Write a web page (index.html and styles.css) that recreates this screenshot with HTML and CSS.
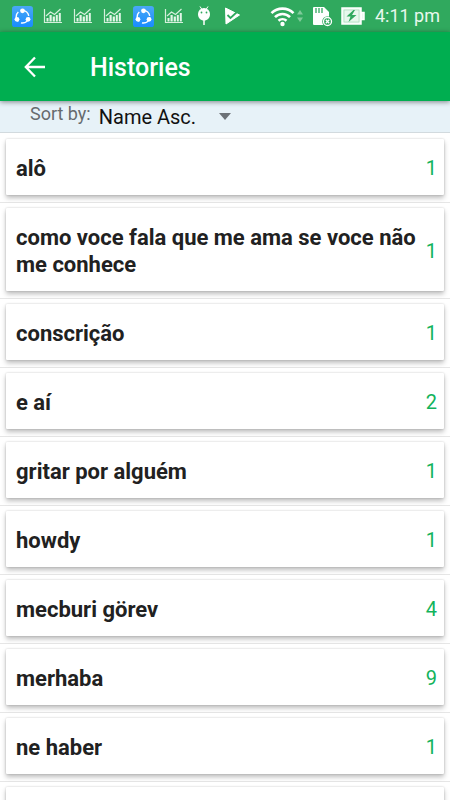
FILE: index.html
```html
<!DOCTYPE html>
<html lang="en">
<head>
<meta charset="utf-8">
<meta name="viewport" content="width=device-width, initial-scale=1">
<title>Histories</title>
<link rel="stylesheet" href="styles.css">
</head>
<body>
<svg class="defs" aria-hidden="true">
  <defs>
    <linearGradient id="blue" x1="0" y1="0" x2="0" y2="1"><stop offset="0" stop-color="#4aa8f5"/><stop offset="1" stop-color="#188cff"/></linearGradient>
    <symbol id="share" viewBox="0 0 22 22">
      <rect width="22" height="22" rx="3" fill="url(#blue)"/>
      <circle cx="11" cy="11.300" r="6.600" fill="none" stroke="#fff" stroke-width="1.500" stroke-dasharray="10.800 3" stroke-dashoffset="-1"/>
      <circle cx="11" cy="5" r="2.500" fill="#fff"/><circle cx="5.200" cy="14" r="2.500" fill="#fff"/><circle cx="16.800" cy="14" r="2.500" fill="#fff"/>
    </symbol>
    <symbol id="chart" viewBox="0 0 20 16">
      <path d="M1.500 1v13.500H19" fill="none" stroke="#d5efdc" stroke-width="1.200"/>
      <path d="M3.500 10h2v3.500h-2zM6.500 7h2.200v6.500H6.500zM9.700 8.500h2.200v5H9.700zM12.800 7h2v6.500h-2zM15.800 5h2v8.500h-2z" fill="#e2f5e7"/>
      <path d="M3 8l4.500-4 4 2.500L17.500 1" fill="none" stroke="#d5efdc" stroke-width="1.200"/>
    </symbol>
  </defs>
</svg>
<div class="status">
  <div class="notices">
    <svg class="app"><use href="#share"/></svg>
    <svg class="chart"><use href="#chart"/></svg>
    <svg class="chart"><use href="#chart"/></svg>
    <svg class="chart"><use href="#chart"/></svg>
    <svg class="app"><use href="#share"/></svg>
    <svg class="chart"><use href="#chart"/></svg>
    <svg class="bug" viewBox="0 0 14 20"><path d="M3.200.8l1.300 2M10.800.8l-1.300 2" stroke="#fff" stroke-linecap="round"/><path d="M1 8a6 6 0 0 1 12 0c0 4-2.500 6.500-6 6.500S1 12 1 8z" fill="#fff"/><path d="M7 13.500V19" stroke="#fff" stroke-width="1.500"/><circle cx="4.500" cy="6.500" r=".9" fill="#30a95e"/><circle cx="9.500" cy="6.500" r=".9" fill="#30a95e"/></svg>
    <svg class="play" viewBox="0 0 16 18"><path d="M1.500 1L15.500 8 2 17z" fill="#fff" stroke="#fff" stroke-linejoin="round"/><path d="M3.500 8l3 3 7-6.500" fill="none" stroke="#30a95e" stroke-width="1.800"/></svg>
  </div>
  <div class="system">
    <svg class="wifi" viewBox="0 0 34 22"><g fill="none" stroke="#fff" stroke-width="2.600"><path d="M1.500 8.200a15.500 15.500 0 0 1 22 0M5 12.100a10.500 10.500 0 0 1 15 0M8.500 15.800a5.800 5.800 0 0 1 8 0"/></g><circle cx="12.500" cy="19" r="2.200" fill="#fff"/><path d="M30 5l3 4.500h-6zM30 17l3-4.500h-6z" fill="#7fcb9a"/></svg>
    <svg class="card-icon" viewBox="0 0 21 21"><path d="M2 1h10l5 5v13H2a1 1 0 0 1-1-1V2a1 1 0 0 1 1-1z" fill="#fff"/><path d="M4 2v5M7 2v5M10 2v5" stroke="#30a95e" stroke-width="1.300"/><circle cx="15.500" cy="15.500" r="5.300" fill="#30a95e"/><circle cx="15.500" cy="15.500" r="4" fill="#30a95e" stroke="#fff" stroke-width="1.300"/><path d="M13.800 13.800l3.400 3.400M17.200 13.800l-3.400 3.400" stroke="#fff" stroke-width="1.300"/></svg>
    <svg class="battery" viewBox="0 0 24 18"><path d="M1 1h19v16H1zM20.500 5.500H23v7h-2.500z" fill="#e8f8ed" stroke="#fff" stroke-width="1.500"/><path d="M3 3h15v12H3z" fill="none" stroke="#a9dcbb" stroke-width=".7"/><path d="M12.500 3L5.500 9.500h4L7.500 15l8-7H11l3-5z" fill="#30a95e"/></svg>
    <span class="clock">4:11 pm</span>
  </div>
</div>
<header class="toolbar">
  <button class="back" type="button" aria-label="Back"><svg viewBox="0 0 22 22"><path d="M21 11H2M11 1.500L1.800 11l9.200 9.500" fill="none" stroke="#fff" stroke-width="2.300"/></svg></button>
  <h1>Histories</h1>
</header>
<div class="sort">
  <label for="order">Sort by:</label>
  <div class="picker">
    <select id="order"><option>Name Asc.</option></select>
    <svg class="caret" viewBox="0 0 12 7"><path d="M0 0h12L6 7z" fill="#6c7277"/></svg>
  </div>
</div>
<ul class="list">
  <li><div class="card"><span class="phrase">alô</span><span class="count">1</span></div></li>
  <li><div class="card"><span class="phrase">como voce fala que me ama se voce não me conhece</span><span class="count">1</span></div></li>
  <li><div class="card"><span class="phrase">conscrição</span><span class="count">1</span></div></li>
  <li><div class="card"><span class="phrase">e aí</span><span class="count">2</span></div></li>
  <li><div class="card"><span class="phrase">gritar por alguém</span><span class="count">1</span></div></li>
  <li><div class="card"><span class="phrase">howdy</span><span class="count">1</span></div></li>
  <li><div class="card"><span class="phrase">mecburi görev</span><span class="count">4</span></div></li>
  <li><div class="card"><span class="phrase">merhaba</span><span class="count">9</span></div></li>
  <li><div class="card"><span class="phrase">ne haber</span><span class="count">1</span></div></li>
  <li><div class="card"></div></li>
</ul>
</body>
</html>
```
FILE: styles.css
```css
* { box-sizing: border-box; }
body {
  margin: 0;
  height: 100vh;
  display: flex;
  flex-direction: column;
  overflow: hidden;
  background: #fff;
  color: #212121;
  font-family: Roboto, sans-serif;
}
svg { display: block; flex: none; }
.defs { position: absolute; width: 0; height: 0; }
.status {
  flex: none;
  display: flex;
  justify-content: space-between;
  align-items: center;
  height: 32px;
  padding: 0 10px 0 12px;
  background: #30a95e;
}
.notices, .system { display: flex; align-items: center; }
.notices { gap: 10px; }
.app { width: 21px; height: 21px; }
.chart { width: 20px; height: 16px; }
.bug { width: 14px; height: 20px; margin: 0 3px; }
.play { width: 16px; height: 18px; }
.system { gap: 8px; }
.wifi { width: 34px; height: 22px; }
.card-icon { width: 21px; height: 21px; }
.battery { width: 24px; height: 18px; }
.clock { margin-left: 2px; color: #e8f8ed; font-size: 18px; line-height: 32px; }
.toolbar {
  flex: none;
  position: relative;
  display: flex;
  align-items: center;
  gap: 42px;
  height: 69px;
  padding: 2px 22px;
  background: #00ae50;
  box-shadow: 0 1px 5px rgba(0, 0, 0, .45);
}
.back { padding: 2px; border: 0; background: none; }
.back svg { width: 22px; height: 22px; }
h1 { margin: 2px 0 0; color: #fff; font-size: 25px; font-weight: 500; line-height: 30px; }
.sort {
  flex: none;
  display: flex;
  gap: 4px;
  height: 32px;
  padding-left: 30px;
  border-bottom: 1px solid #d2dade;
  background: #e7f2f8;
}
.sort label { color: #666b6e; font-size: 18px; line-height: 26px; }
.picker { position: relative; width: 140px; }
.picker select {
  appearance: none;
  width: 100%;
  height: 31px;
  padding: 0 0 0 4px;
  border: 0;
  background: none;
  color: #111;
  font: 20px Roboto, sans-serif;
}
.caret {
  position: absolute;
  right: 4px;
  top: 12px;
  width: 12px;
  height: 7px;
  pointer-events: none;
}
.list {
  flex: 1;
  min-height: 0;
  overflow: hidden;
  margin: 0;
  padding: 1px 0 0;
  list-style: none;
}
.list li { padding: 5px 6px 7px; border-bottom: 1px solid #e6e6e6; }
.card {
  display: flex;
  align-items: center;
  min-height: 56px;
  padding: 16px 7px 13px 10px;
  border-radius: 1px;
  background: #fff;
  box-shadow: 0 3px 5px rgba(0, 0, 0, .26), 0 0 2px rgba(0, 0, 0, .2);
}
.phrase { flex: 1; font-size: 22px; font-weight: 700; line-height: 27px; }
.count { color: #12b35c; font-size: 20px; line-height: 27px; }
```
